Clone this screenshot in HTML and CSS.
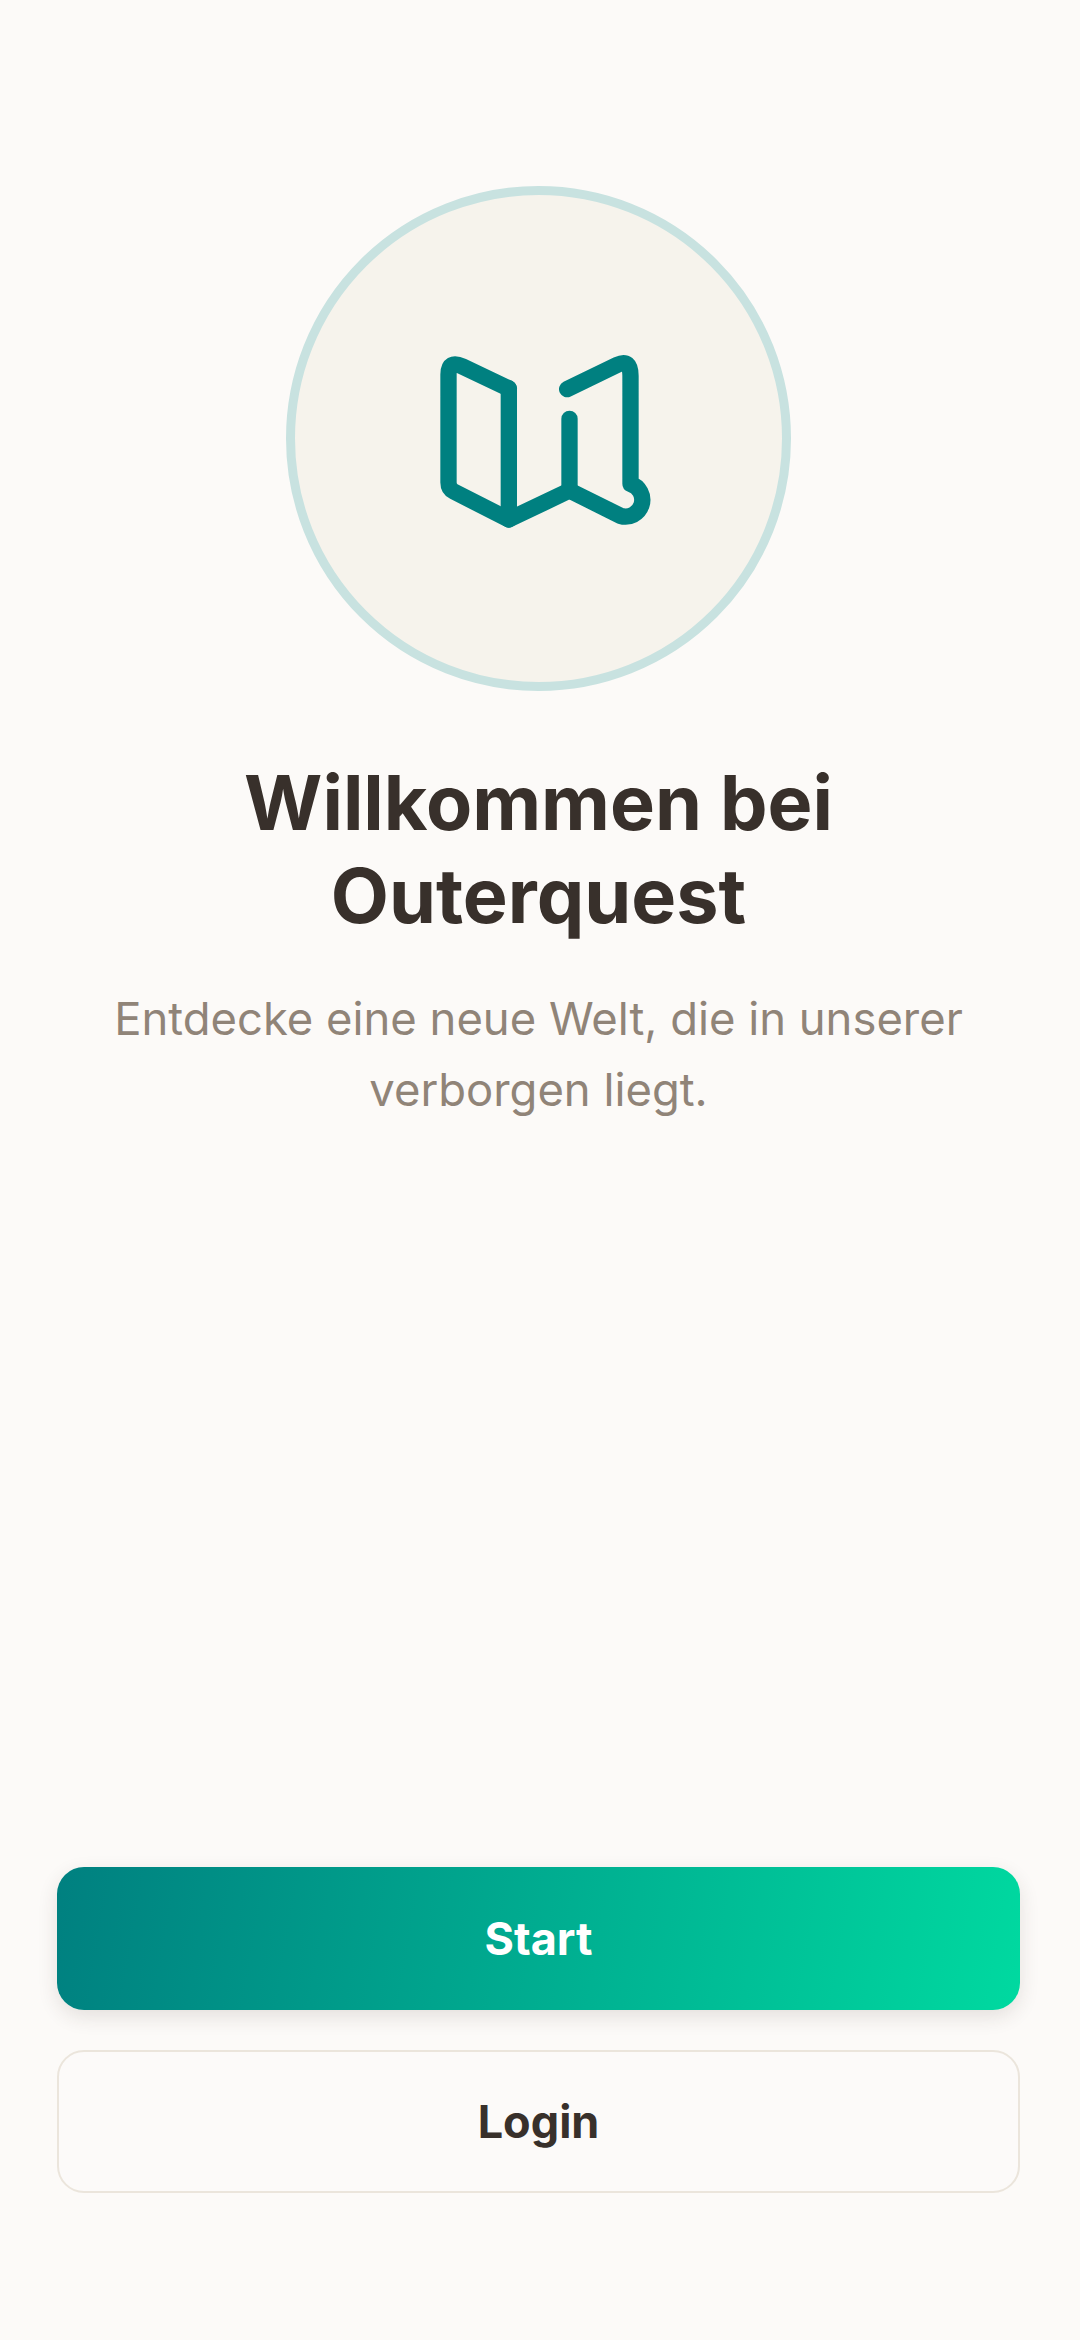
FILE: index.html
```html
<!DOCTYPE html>
<html lang="de">
<head>
    <meta charset="UTF-8">
    <meta name="viewport" content="width=device-width, initial-scale=1.0">
    <title>Outerquest</title>
    <link rel="stylesheet" href="styles.css">
</head>
<body>

    <main class="screen">
        <div class="hero">
            <div class="hero-circle">
                <svg class="hero-icon" viewBox="-4.5 -4.5 720 600" fill="none" stroke="#008080" stroke-width="49" stroke-linecap="round" stroke-linejoin="round">
                    <path d="M265 144 L126 78 Q84 58 84 102 L84 426 Q84 445 100 453 L265 537 L447 450 L600 526 A50 50 0 1 0 630 430 L630 106 Q630 54 590 73 L440 146"/>
                    <path d="M265 144 L265 537"/>
                    <path d="M447 235 L447 450"/>
                </svg>
            </div>
            <h1>Willkommen bei Outerquest</h1>
            <p>Entdecke eine neue Welt, die in unserer verborgen liegt.</p>
        </div>

        <div class="actions">
            <button class="btn btn-start" type="button">Start</button>
            <button class="btn btn-login" type="button">Login</button>
        </div>
    </main>

</body>
</html>
```

FILE: styles.css
```css
* {
    box-sizing: border-box;
}

body {
    margin: 0;
    background-color: #fcfaf8;
    font-family: Inter, "Noto Sans", sans-serif;
}

.screen {
    display: flex;
    flex-direction: column;
    justify-content: space-between;
    height: 2340px;
    padding: 186px 60px 147px 57px;
}

.hero {
    display: flex;
    flex-direction: column;
    align-items: center;
    text-align: center;
}

.hero-circle {
    display: flex;
    align-items: center;
    justify-content: center;
    width: 505px;
    height: 505px;
    border: 9px solid #c8e2e0;
    border-radius: 50%;
    background-color: #f6f3ec;
}

.hero-icon {
    width: 240px;
    height: 200px;
}

h1 {
    margin: 65px 0 0;
    width: 760px;
    font-size: 75.5px;
    line-height: 93px;
    font-weight: 700;
    color: #38302b;
}

p {
    margin: 41px 0 0;
    width: 900px;
    font-size: 45.4px;
    line-height: 71px;
    color: #908478;
}

.actions {
    display: flex;
    flex-direction: column;
    gap: 40px;
}

.btn {
    width: 100%;
    height: 143px;
    border-radius: 27px;
    font-family: inherit;
    font-size: 45px;
    font-weight: 700;
}

.btn-start {
    border: none;
    background: linear-gradient(100deg, #008080, #00d9a0);
    color: white;
    box-shadow: 0 7px 20px rgba(60, 40, 30, 0.12);
}

.btn-login {
    border: 2.25px solid #ebe5dc;
    background-color: #fcfaf9;
    color: #38302b;
}
```
